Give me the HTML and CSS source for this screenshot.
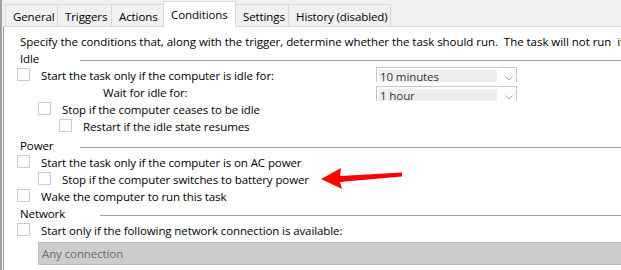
FILE: index.html
```html
<!DOCTYPE html>
<html lang="en">
<head>
  <meta charset="UTF-8" />
  <title>Task Properties - Conditions</title>
  <link rel="stylesheet" href="styles.css">
</head>
<body>
  <div class="window">
    <ul class="tabs">
      <li class="tab tab-general">General</li>
      <li class="tab tab-triggers">Triggers</li>
      <li class="tab tab-actions">Actions</li>
      <li class="tab tab-conditions is-active">Conditions</li>
      <li class="tab tab-settings">Settings</li>
      <li class="tab tab-history">History (disabled)</li>
    </ul>

    <div class="panel">
      <p class="intro">Specify the conditions that, along with the trigger, determine whether the task should run.&nbsp; The task will not run&nbsp; if any condition specified here is not true.</p>

      <div class="group-title"><span>Idle</span><i class="rule"></i></div>
      <div class="row has-combo">
        <div class="option"><span class="check"></span><span class="label">Start the task only if the computer is idle for:</span></div>
        <div class="combo">
          <span class="combo-value">10 minutes</span>
          <svg class="chevron" viewBox="0 0 8 5"><polyline points="0.5,0.5 4,4 7.5,0.5"/></svg>
        </div>
      </div>
      <div class="row has-combo">
        <div class="option wait"><span class="label">Wait for idle for:</span></div>
        <div class="combo low">
          <span class="combo-value">1 hour</span>
          <svg class="chevron" viewBox="0 0 8 5"><polyline points="0.5,0.5 4,4 7.5,0.5"/></svg>
        </div>
      </div>
      <div class="row indent-1"><span class="check"></span><span class="label">Stop if the computer ceases to be idle</span></div>
      <div class="row indent-2"><span class="check"></span><span class="label">Restart if the idle state resumes</span></div>

      <div class="group-title spaced"><span>Power</span><i class="rule"></i></div>
      <div class="row"><span class="check"></span><span class="label">Start the task only if the computer is on AC power</span></div>
      <div class="row indent-1"><span class="check"></span><span class="label">Stop if the computer switches to battery power</span></div>
      <div class="row"><span class="check"></span><span class="label">Wake the computer to run this task</span></div>

      <div class="group-title wide"><span>Network</span><i class="rule"></i></div>
      <div class="row"><span class="check"></span><span class="label">Start only if the following network connection is available:</span></div>
      <div class="select-wide">Any connection</div>
    </div>

    <!-- annotation arrow -->
    <svg class="arrow" viewBox="0 0 90 30">
      <path d="M4 16 L24 5 L23 13 L85 9.5 L85 13.5 L23 19 L25 26 Z"/>
    </svg>
  </div>
</body>
</html>
```

FILE: styles.css
```css
* {
  box-sizing: border-box;
}
body {
  margin: 0;
  background: #f0f0f0;
  font-family: "Open Sans", "Noto Sans", sans-serif;
  font-size: 11.5px;
  letter-spacing: -0.1px;
  color: #000;
  overflow: hidden;
}
.window {
  position: relative;
  height: 270px;
  border-left: 2px solid #a0a0a0;
  padding-left: 1px;
  overflow: hidden;
}

/* tab strip */
.tabs {
  list-style: none;
  margin: 0 0 -1px;
  padding: 0 0 0 2px;
  display: flex;
  align-items: flex-end;
  height: 27px;
  position: relative;
  z-index: 1;
}
.tab {
  height: 22px;
  margin-bottom: 1px;
  padding: 1px 0 0 7px;
  line-height: 21px;
  white-space: nowrap;
  background: #f0f0f0;
  border: 1px solid #d9d9d9;
  border-right: none;
  border-bottom: none;
}
.tab-general { width: 52px; }
.tab-triggers { width: 54px; }
.tab-actions { width: 52px; }
.tab-conditions { width: 73px; }
.tab-settings { width: 53px; margin-left: -1px; }
.tab-history { width: 103px; border-right: 1px solid #d9d9d9; }
.tab.is-active {
  height: 26px;
  margin-bottom: 0;
  padding-top: 2px;
  line-height: 22px;
  background: #fff;
  border-right: 1px solid #d9d9d9;
}

/* page body */
.panel {
  background: #fff;
  border-top: 1px solid #d9d9d9;
  border-left: 1px solid #a0a0a0;
  padding: 6px 0 0 13px;
  height: 300px;
  white-space: nowrap;
}
.intro {
  margin: 0 0 0 3px;
  line-height: 17px;
  letter-spacing: -0.04px;
}
.group-title {
  display: flex;
  align-items: center;
  height: 17px;
  line-height: 17px;
  margin-left: 3px;
}
.group-title span { width: 60px; flex: none; }
.group-title.wide span { width: 80px; }
.group-title.spaced { height: 19px; padding-top: 2px; }
.rule {
  flex: 1;
  margin-top: 3px;
  border-top: 1px solid #a0a0a0;
}

.row {
  display: flex;
  height: 17px;
  line-height: 17px;
}
.row.indent-1 { padding-left: 21px; }
.row.indent-2 { padding-left: 42px; }
.row.has-combo {
  display: grid;
  grid-template-columns: 359px 141px;
}
.option { display: flex; }
.option.wait { padding-left: 86px; }
.check {
  flex: none;
  width: 13px;
  height: 13px;
  margin: 1px 11px 0 0;
  border: 1px solid #cccccc;
  background: #fff;
}

.combo {
  display: flex;
  height: 15px;
  padding: 2px 0 0 2px;
  border: 1px solid #c8c8c8;
  border-bottom: none;
}
.combo.low { margin-top: 2px; }
.combo-value {
  width: 118px;
  height: 12px;
  padding-left: 1px;
  line-height: 13px;
  background: #eeeeee;
  color: #333;
}
.chevron {
  width: 8px;
  height: 5px;
  margin: 6px 0 0 8px;
  fill: none;
  stroke: #a8a8a8;
  stroke-width: 1;
}

.select-wide {
  margin: 3px 0 0 21px;
  height: 23px;
  padding-left: 3px;
  line-height: 21px;
  background: #cccccc;
  border: 1px solid #bfbfbf;
  border-right: none;
  color: #6d6d6d;
}

.arrow {
  position: absolute;
  left: 315px;
  top: 163px;
  width: 90px;
  height: 30px;
  fill: #ff0000;
}
```
